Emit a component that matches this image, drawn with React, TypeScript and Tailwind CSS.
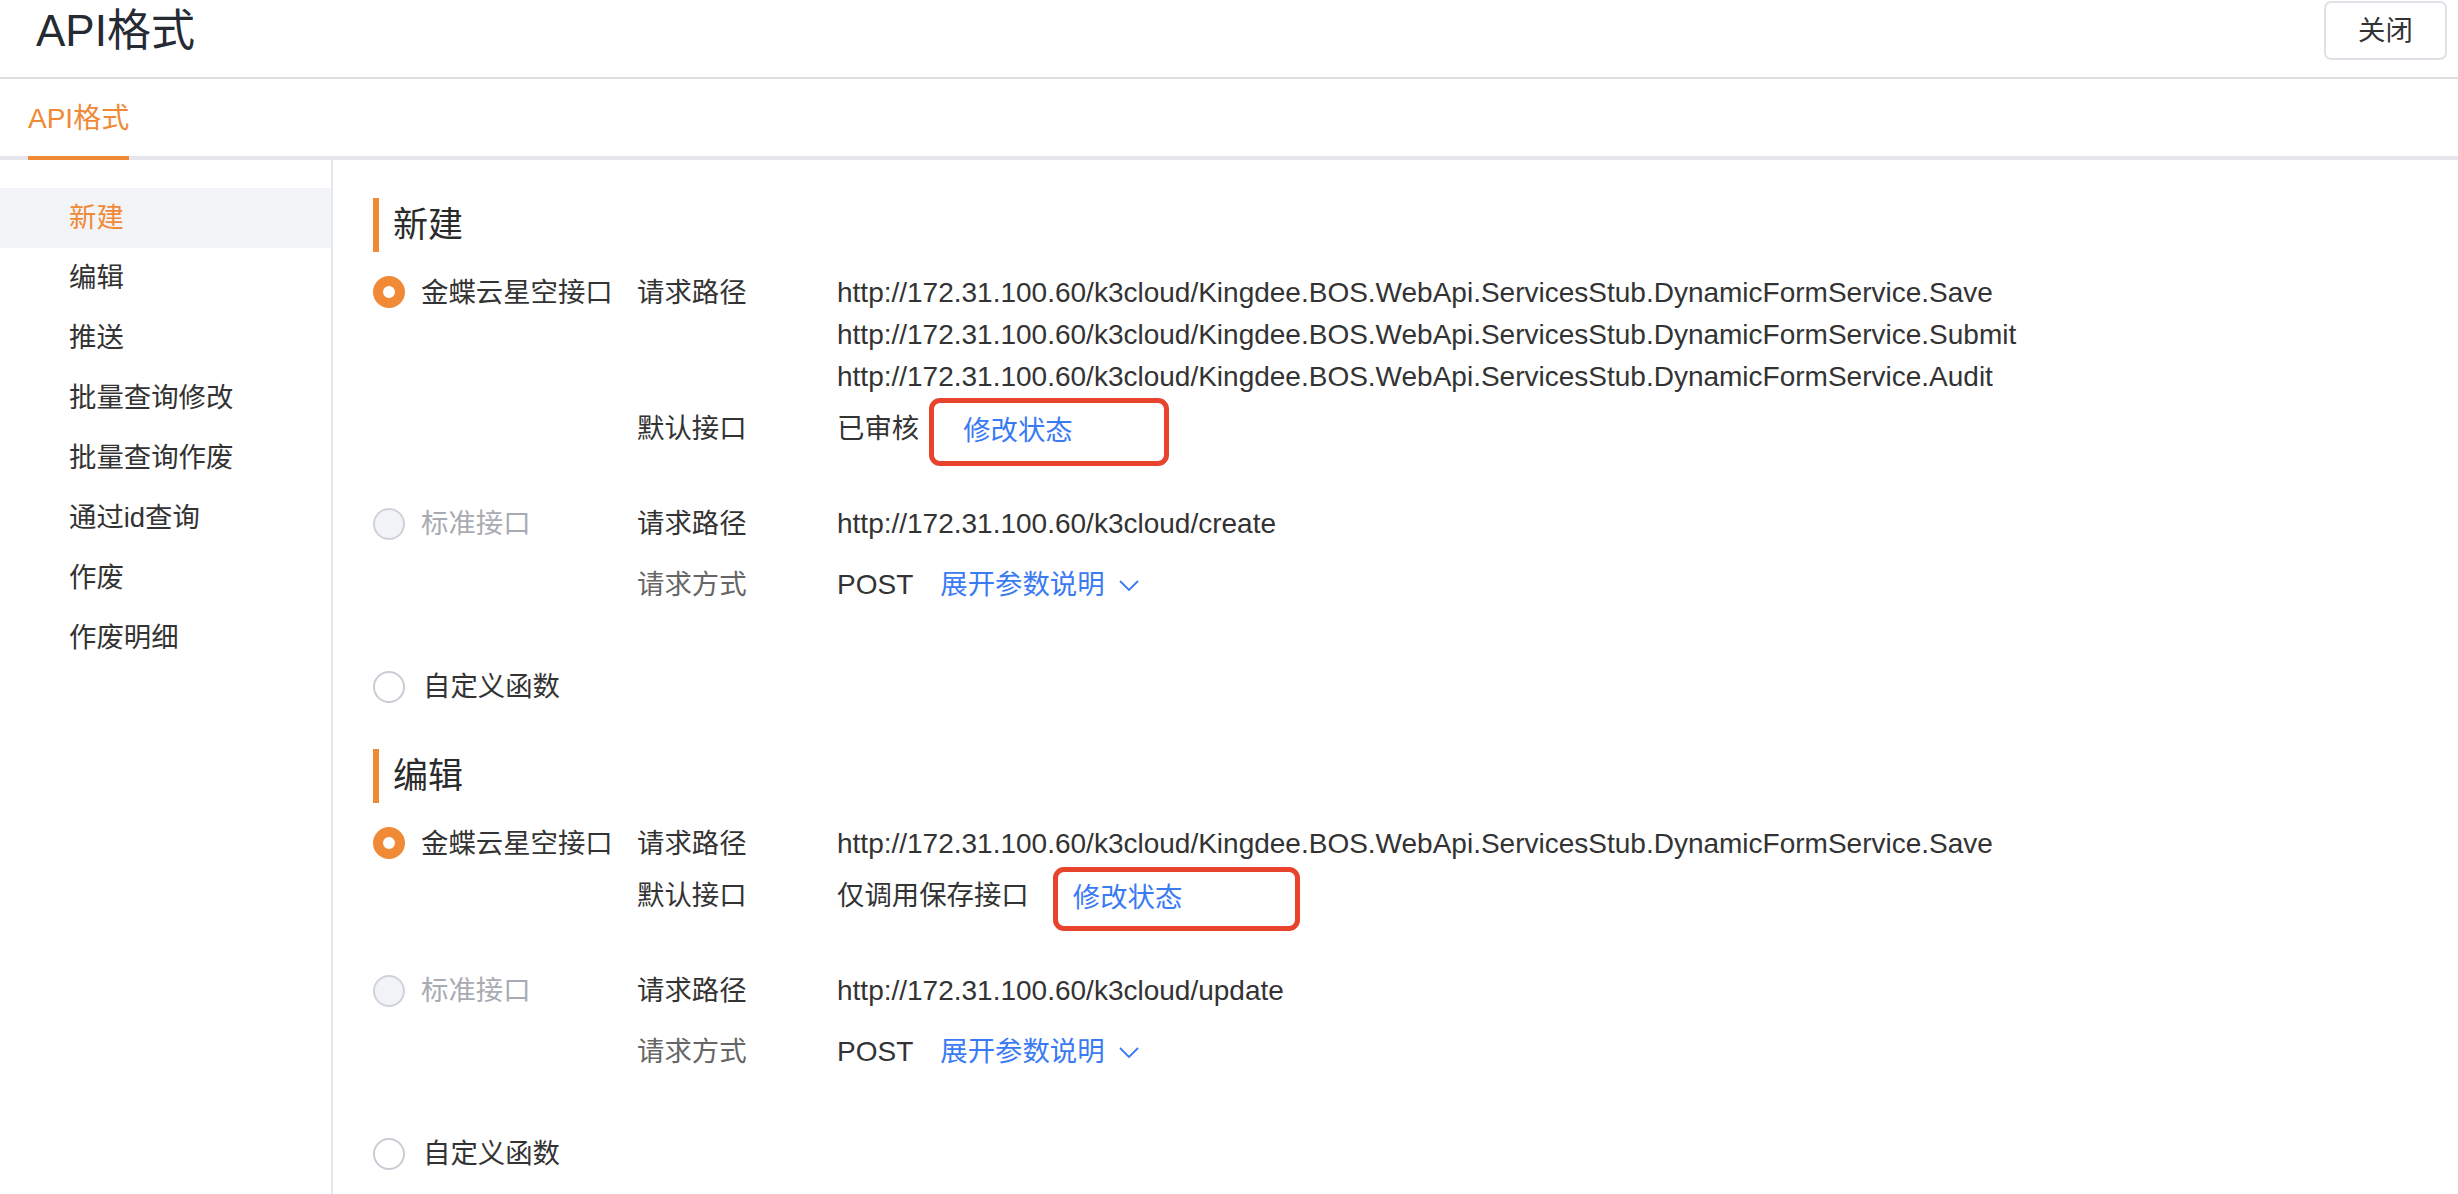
import React from "react";

const FONT = { fontFamily: '"Liberation Sans", "Noto Sans CJK SC", sans-serif' };

function Radio({ kind }: { kind: "checked" | "disabled" | "empty" }) {
  if (kind === "checked")
    return <span className="inline-block w-[32px] h-[32px] rounded-full border-[10px] border-[#f08a37] bg-white shrink-0" />;
  if (kind === "disabled")
    return <span className="inline-block w-[32px] h-[32px] rounded-full border-2 border-[#cfd2d9] bg-[#f2f3f7] shrink-0" />;
  return <span className="inline-block w-[32px] h-[32px] rounded-full border-2 border-[#c9ccd4] bg-white shrink-0" />;
}

function Chevron() {
  return (
    <svg width="22" height="13" viewBox="0 0 22 13" className="ml-[13px]">
      <path d="M2 2 L11 11 L20 2" fill="none" stroke="#3a7af3" strokeWidth="1.8" />
    </svg>
  );
}

type SectionProps = {
  title: string;
  urls: string[];
  defaultText: string;
  box: string;
  stdUrl: string;
};

function Section({ title, urls, defaultText, box, stdUrl }: SectionProps) {
  return (
    <div className="flex flex-col">
      <div className="flex items-center h-[54px] border-l-[6px] border-[#f08a37] pl-[14px]">
        <span className="text-[35px] leading-[54px] text-[#2b2b2b]">{title}</span>
      </div>
      {/* kingdee row */}
      <div className="grid grid-cols-[264px_200px_1fr] mt-[19px] text-[27.4px] leading-[42px] text-[#333]">
        <div className="flex items-center h-[42px]">
          <Radio kind="checked" />
          <span className="ml-[16px] translate-y-[1px]">金蝶云星空接口</span>
        </div>
        <div className="translate-y-[1px]">请求路径</div>
        <div className="flex flex-col">
          {urls.map((u) => (
            <div key={u} className="h-[42px] whitespace-nowrap text-[28px] translate-y-[1px]">{u}</div>
          ))}
        </div>
        <div className="mt-[11px]" />
        <div className="mt-[11px]">默认接口</div>
        <div className="mt-[11px] flex items-center h-[42px]">
          <span>{defaultText}</span>
          <span className="relative inline-block ml-[44px] text-[#3a7af3] h-[42px] translate-y-[2px]">
            修改状态
            <span className={"absolute border-[5px] border-[#e8432d] rounded-[11px] " + box} />
          </span>
        </div>
      </div>
      {/* standard row */}
      <div className="grid grid-cols-[264px_200px_1fr] mt-[53px] text-[27.4px] leading-[42px] text-[#333]">
        <div className="flex items-center h-[42px]">
          <Radio kind="disabled" />
          <span className="ml-[16px] text-[#a9abb2]">标准接口</span>
        </div>
        <div>请求路径</div>
        <div className="whitespace-nowrap text-[28px]">{stdUrl}</div>
        <div className="mt-[19px]" />
        <div className="mt-[19px] text-[#666]">请求方式</div>
        <div className="mt-[19px] flex items-center h-[42px]">
          <span className="text-[28px]">POST</span>
          <span className="ml-[27px] text-[#3a7af3]">展开参数说明</span>
          <Chevron />
        </div>
      </div>
      {/* custom row */}
      <div className="flex items-center h-[42px] mt-[60px] text-[27.4px] leading-[42px] text-[#333]">
        <Radio kind="empty" />
        <span className="ml-[18px]">自定义函数</span>
      </div>
    </div>
  );
}

export default function App() {
  const menu = ["新建", "编辑", "推送", "批量查询修改", "批量查询作废", "通过id查询", "作废", "作废明细"];
  const base = "http://172.31.100.60/k3cloud/Kingdee.BOS.WebApi.ServicesStub.DynamicFormService.";
  return (
    <div className="w-[2458px] h-[1194px] bg-white overflow-hidden flex flex-col" style={FONT}>
      {/* header */}
      <div className="h-[79px] shrink-0 flex items-center justify-between pl-[36px] pr-[11px] pb-[16px] border-b-2 border-[#dedede]">
        <span className="text-[44px] leading-[50px] text-[#262b33]">API格式</span>
        <button className="w-[123px] h-[59px] border-2 border-[#dfe1e6] rounded-[7px] text-[27.4px] text-[#333] bg-white">
          关闭
        </button>
      </div>
      {/* tabs */}
      <div className="h-[81px] shrink-0 border-b-4 border-[#e4e6eb] flex items-end pl-[28px]">
        <div className="-mb-[4px] border-b-4 border-[#f08a37] h-[81px] flex items-center text-[28px] text-[#f08a37] pt-[2px]">
          API格式
        </div>
      </div>
      {/* body */}
      <div className="flex flex-1 min-h-0">
        <div className="w-[333px] shrink-0 border-r-2 border-[#e6e8ec] pt-[28px] flex flex-col">
          {menu.map((m, i) => (
            <div
              key={m}
              className={
                "h-[60px] flex items-center pl-[69px] text-[27.4px] " +
                (i === 0 ? "bg-[#f3f4f8] text-[#f08a37]" : "text-[#333]")
              }
            >
              {m}
            </div>
          ))}
        </div>
        <div className="flex-1 pl-[40px] pt-[38px] flex flex-col gap-[41px]">
          <Section
            title="新建"
            urls={[base + "Save", base + "Submit", base + "Audit"]}
            defaultText="已审核"
            box="-left-[34px] -right-[96px] -top-[12px] -bottom-[14px]"
            stdUrl="http://172.31.100.60/k3cloud/create"
          />
          <Section
            title="编辑"
            urls={[base + "Save"]}
            defaultText="仅调用保存接口"
            box="-left-[20px] -right-[118px] -top-[10px] -bottom-[12px]"
            stdUrl="http://172.31.100.60/k3cloud/update"
          />
        </div>
      </div>
    </div>
  );
}
